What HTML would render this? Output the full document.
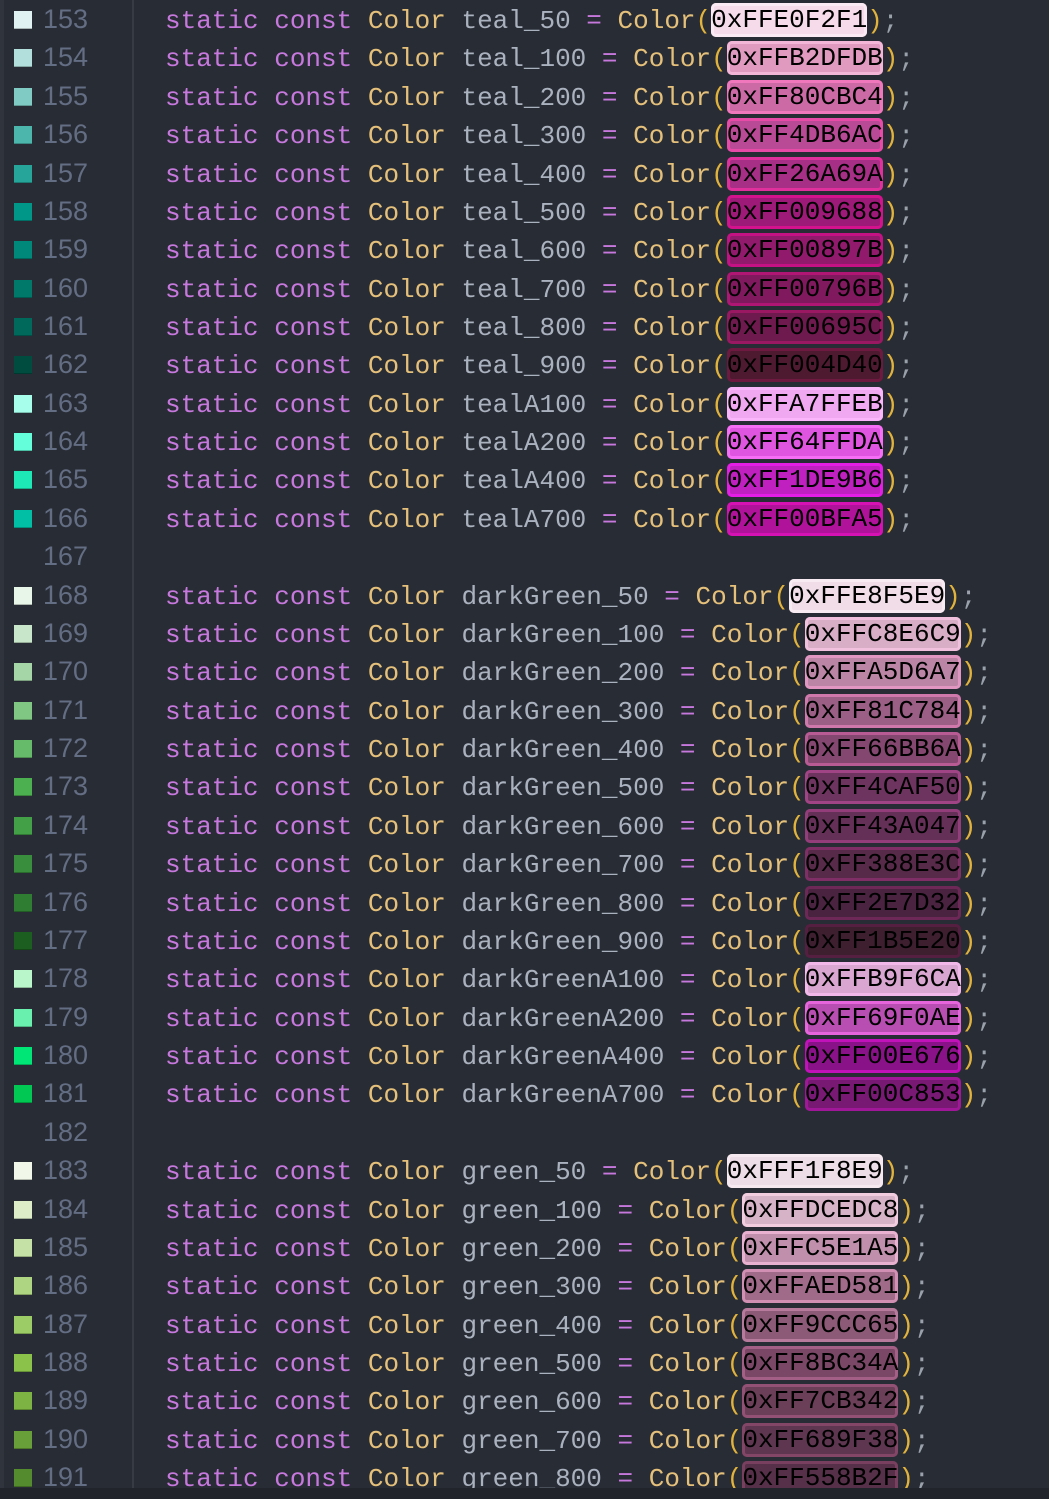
<!DOCTYPE html>
<html><head><meta charset="utf-8"><style>
html,body{margin:0;padding:0}
body{width:1049px;height:1499px;background:#282c34;position:relative;overflow:hidden;font-family:"Liberation Mono","DejaVu Sans Mono",monospace}
.strip{position:absolute;left:0;top:0;width:4px;height:1499px;background:#30343c}
.gl{position:absolute;left:132px;top:0;width:2px;height:1488px;background:#363b44}
.l{position:absolute;left:0;height:38px;width:1049px}
.l i{position:absolute;left:14px;top:10px;width:18px;height:18px;box-shadow:inset 0 -1px 0 rgba(0,0,0,.25)}
.l b{position:absolute;left:43px;top:3px;line-height:38px;font:27px "Liberation Sans","DejaVu Sans",sans-serif;font-weight:normal;color:#636d83}
.l code{position:absolute;left:165px;top:1px;line-height:38px;font-size:26px;font-family:"Liberation Mono",monospace;color:#abb2bf;white-space:pre}
k{color:#c678dd}t{color:#e5c07b}p{color:#e2b33c;display:inline}s{color:#9aa1ab;text-decoration:none}
h{display:inline-block;line-height:34px;height:34px;color:#000;border-radius:5px;vertical-align:top;margin-top:1px}
.bot{position:absolute;left:0;top:1488px;width:1049px;height:11px;background:#21252b}
</style></head><body>
<div class="strip"></div><div class="gl"></div>

<div class="l" style="top:1px"><i style="background:#E0F2F1"></i><b>153</b><code><k>static const</k> <t>Color</t> teal_50 <k>=</k> <t>Color</t><p>(</p><h style="background:#f6dcea;box-shadow:inset 0 0 0 3px #fbe9f3">0xFFE0F2F1</h><p>)</p><s>;</s></code></div>
<div class="l" style="top:39.4px"><i style="background:#B2DFDB"></i><b>154</b><code><k>static const</k> <t>Color</t> teal_100 <k>=</k> <t>Color</t><p>(</p><h style="background:#e09ac0;box-shadow:inset 0 0 0 3px #f3b6d6">0xFFB2DFDB</h><p>)</p><s>;</s></code></div>
<div class="l" style="top:77.7px"><i style="background:#80CBC4"></i><b>155</b><code><k>static const</k> <t>Color</t> teal_200 <k>=</k> <t>Color</t><p>(</p><h style="background:#cc6aa6;box-shadow:inset 0 0 0 3px #f077bb">0xFF80CBC4</h><p>)</p><s>;</s></code></div>
<div class="l" style="top:116.1px"><i style="background:#4DB6AC"></i><b>156</b><code><k>static const</k> <t>Color</t> teal_300 <k>=</k> <t>Color</t><p>(</p><h style="background:#b94a95;box-shadow:inset 0 0 0 3px #e84aa8">0xFF4DB6AC</h><p>)</p><s>;</s></code></div>
<div class="l" style="top:154.5px"><i style="background:#26A69A"></i><b>157</b><code><k>static const</k> <t>Color</t> teal_400 <k>=</k> <t>Color</t><p>(</p><h style="background:#a82f86;box-shadow:inset 0 0 0 3px #e0309c">0xFF26A69A</h><p>)</p><s>;</s></code></div>
<div class="l" style="top:192.9px"><i style="background:#009688"></i><b>158</b><code><k>static const</k> <t>Color</t> teal_500 <k>=</k> <t>Color</t><p>(</p><h style="background:#9e1a78;box-shadow:inset 0 0 0 3px #d4128e">0xFF009688</h><p>)</p><s>;</s></code></div>
<div class="l" style="top:231.2px"><i style="background:#00897B"></i><b>159</b><code><k>static const</k> <t>Color</t> teal_600 <k>=</k> <t>Color</t><p>(</p><h style="background:#911a6d;box-shadow:inset 0 0 0 3px #c41284">0xFF00897B</h><p>)</p><s>;</s></code></div>
<div class="l" style="top:269.6px"><i style="background:#00796B"></i><b>160</b><code><k>static const</k> <t>Color</t> teal_700 <k>=</k> <t>Color</t><p>(</p><h style="background:#80195e;box-shadow:inset 0 0 0 3px #b01674">0xFF00796B</h><p>)</p><s>;</s></code></div>
<div class="l" style="top:308px"><i style="background:#00695C"></i><b>161</b><code><k>static const</k> <t>Color</t> teal_800 <k>=</k> <t>Color</t><p>(</p><h style="background:#6e1a4e;box-shadow:inset 0 0 0 3px #9a1862">0xFF00695C</h><p>)</p><s>;</s></code></div>
<div class="l" style="top:346.3px"><i style="background:#004D40"></i><b>162</b><code><k>static const</k> <t>Color</t> teal_900 <k>=</k> <t>Color</t><p>(</p><h style="background:#4e1a30;box-shadow:inset 0 0 0 3px #6e1a40">0xFF004D40</h><p>)</p><s>;</s></code></div>
<div class="l" style="top:384.7px"><i style="background:#A7FFEB"></i><b>163</b><code><k>static const</k> <t>Color</t> tealA100 <k>=</k> <t>Color</t><p>(</p><h style="background:#f0a8f0;box-shadow:inset 0 0 0 3px #fbb6fb">0xFFA7FFEB</h><p>)</p><s>;</s></code></div>
<div class="l" style="top:423.1px"><i style="background:#64FFDA"></i><b>164</b><code><k>static const</k> <t>Color</t> tealA200 <k>=</k> <t>Color</t><p>(</p><h style="background:#e055df;box-shadow:inset 0 0 0 3px #f56ef5">0xFF64FFDA</h><p>)</p><s>;</s></code></div>
<div class="l" style="top:461.4px"><i style="background:#1DE9B6"></i><b>165</b><code><k>static const</k> <t>Color</t> tealA400 <k>=</k> <t>Color</t><p>(</p><h style="background:#c020c0;box-shadow:inset 0 0 0 3px #e41ee4">0xFF1DE9B6</h><p>)</p><s>;</s></code></div>
<div class="l" style="top:499.8px"><i style="background:#00BFA5"></i><b>166</b><code><k>static const</k> <t>Color</t> tealA700 <k>=</k> <t>Color</t><p>(</p><h style="background:#b0139a;box-shadow:inset 0 0 0 3px #d612b4">0xFF00BFA5</h><p>)</p><s>;</s></code></div>
<div class="l" style="top:538.2px"><b>167</b></div>
<div class="l" style="top:576.5px"><i style="background:#E8F5E9"></i><b>168</b><code><k>static const</k> <t>Color</t> darkGreen_50 <k>=</k> <t>Color</t><p>(</p><h style="background:#f0dde8;box-shadow:inset 0 0 0 3px #f8ebf2">0xFFE8F5E9</h><p>)</p><s>;</s></code></div>
<div class="l" style="top:614.9px"><i style="background:#C8E6C9"></i><b>169</b><code><k>static const</k> <t>Color</t> darkGreen_100 <k>=</k> <t>Color</t><p>(</p><h style="background:#d8adc6;box-shadow:inset 0 0 0 3px #f0c0dc">0xFFC8E6C9</h><p>)</p><s>;</s></code></div>
<div class="l" style="top:653.3px"><i style="background:#A5D6A7"></i><b>170</b><code><k>static const</k> <t>Color</t> darkGreen_200 <k>=</k> <t>Color</t><p>(</p><h style="background:#bb86a6;box-shadow:inset 0 0 0 3px #e196c2">0xFFA5D6A7</h><p>)</p><s>;</s></code></div>
<div class="l" style="top:691.7px"><i style="background:#81C784"></i><b>171</b><code><k>static const</k> <t>Color</t> darkGreen_300 <k>=</k> <t>Color</t><p>(</p><h style="background:#9b5f85;box-shadow:inset 0 0 0 3px #cf78ab">0xFF81C784</h><p>)</p><s>;</s></code></div>
<div class="l" style="top:730px"><i style="background:#66BB6A"></i><b>172</b><code><k>static const</k> <t>Color</t> darkGreen_400 <k>=</k> <t>Color</t><p>(</p><h style="background:#84476f;box-shadow:inset 0 0 0 3px #b85b95">0xFF66BB6A</h><p>)</p><s>;</s></code></div>
<div class="l" style="top:768.4px"><i style="background:#4CAF50"></i><b>173</b><code><k>static const</k> <t>Color</t> darkGreen_500 <k>=</k> <t>Color</t><p>(</p><h style="background:#6e3460;box-shadow:inset 0 0 0 3px #a04485">0xFF4CAF50</h><p>)</p><s>;</s></code></div>
<div class="l" style="top:806.8px"><i style="background:#43A047"></i><b>174</b><code><k>static const</k> <t>Color</t> darkGreen_600 <k>=</k> <t>Color</t><p>(</p><h style="background:#653058;box-shadow:inset 0 0 0 3px #933e7a">0xFF43A047</h><p>)</p><s>;</s></code></div>
<div class="l" style="top:845.1px"><i style="background:#388E3C"></i><b>175</b><code><k>static const</k> <t>Color</t> darkGreen_700 <k>=</k> <t>Color</t><p>(</p><h style="background:#582a49;box-shadow:inset 0 0 0 3px #802e66">0xFF388E3C</h><p>)</p><s>;</s></code></div>
<div class="l" style="top:883.5px"><i style="background:#2E7D32"></i><b>176</b><code><k>static const</k> <t>Color</t> darkGreen_800 <k>=</k> <t>Color</t><p>(</p><h style="background:#4a2340;box-shadow:inset 0 0 0 3px #6e2858">0xFF2E7D32</h><p>)</p><s>;</s></code></div>
<div class="l" style="top:921.9px"><i style="background:#1B5E20"></i><b>177</b><code><k>static const</k> <t>Color</t> darkGreen_900 <k>=</k> <t>Color</t><p>(</p><h style="background:#3e1f30;box-shadow:inset 0 0 0 3px #551f42">0xFF1B5E20</h><p>)</p><s>;</s></code></div>
<div class="l" style="top:960.2px"><i style="background:#B9F6CA"></i><b>178</b><code><k>static const</k> <t>Color</t> darkGreenA100 <k>=</k> <t>Color</t><p>(</p><h style="background:#d8a6d0;box-shadow:inset 0 0 0 3px #f2b8ea">0xFFB9F6CA</h><p>)</p><s>;</s></code></div>
<div class="l" style="top:998.6px"><i style="background:#69F0AE"></i><b>179</b><code><k>static const</k> <t>Color</t> darkGreenA200 <k>=</k> <t>Color</t><p>(</p><h style="background:#b94eb2;box-shadow:inset 0 0 0 3px #e664dc">0xFF69F0AE</h><p>)</p><s>;</s></code></div>
<div class="l" style="top:1037px"><i style="background:#00E676"></i><b>180</b><code><k>static const</k> <t>Color</t> darkGreenA400 <k>=</k> <t>Color</t><p>(</p><h style="background:#8a1288;box-shadow:inset 0 0 0 3px #c012b8">0xFF00E676</h><p>)</p><s>;</s></code></div>
<div class="l" style="top:1075.3px"><i style="background:#00C853"></i><b>181</b><code><k>static const</k> <t>Color</t> darkGreenA700 <k>=</k> <t>Color</t><p>(</p><h style="background:#781a74;box-shadow:inset 0 0 0 3px #a01898">0xFF00C853</h><p>)</p><s>;</s></code></div>
<div class="l" style="top:1113.7px"><b>182</b></div>
<div class="l" style="top:1152.1px"><i style="background:#F1F8E9"></i><b>183</b><code><k>static const</k> <t>Color</t> green_50 <k>=</k> <t>Color</t><p>(</p><h style="background:#eddde6;box-shadow:inset 0 0 0 3px #f6eaf0">0xFFF1F8E9</h><p>)</p><s>;</s></code></div>
<div class="l" style="top:1190.5px"><i style="background:#DCEDC8"></i><b>184</b><code><k>static const</k> <t>Color</t> green_100 <k>=</k> <t>Color</t><p>(</p><h style="background:#d7b3c8;box-shadow:inset 0 0 0 3px #f2cde0">0xFFDCEDC8</h><p>)</p><s>;</s></code></div>
<div class="l" style="top:1228.8px"><i style="background:#C5E1A5"></i><b>185</b><code><k>static const</k> <t>Color</t> green_200 <k>=</k> <t>Color</t><p>(</p><h style="background:#bf8fab;box-shadow:inset 0 0 0 3px #e8b1cf">0xFFC5E1A5</h><p>)</p><s>;</s></code></div>
<div class="l" style="top:1267.2px"><i style="background:#AED581"></i><b>186</b><code><k>static const</k> <t>Color</t> green_300 <k>=</k> <t>Color</t><p>(</p><h style="background:#a06a89;box-shadow:inset 0 0 0 3px #d08fb3">0xFFAED581</h><p>)</p><s>;</s></code></div>
<div class="l" style="top:1305.6px"><i style="background:#9CCC65"></i><b>187</b><code><k>static const</k> <t>Color</t> green_400 <k>=</k> <t>Color</t><p>(</p><h style="background:#8c5a76;box-shadow:inset 0 0 0 3px #b77a9d">0xFF9CCC65</h><p>)</p><s>;</s></code></div>
<div class="l" style="top:1343.9px"><i style="background:#8BC34A"></i><b>188</b><code><k>static const</k> <t>Color</t> green_500 <k>=</k> <t>Color</t><p>(</p><h style="background:#7a4866;box-shadow:inset 0 0 0 3px #a35f86">0xFF8BC34A</h><p>)</p><s>;</s></code></div>
<div class="l" style="top:1382.3px"><i style="background:#7CB342"></i><b>189</b><code><k>static const</k> <t>Color</t> green_600 <k>=</k> <t>Color</t><p>(</p><h style="background:#6b3f58;box-shadow:inset 0 0 0 3px #935175">0xFF7CB342</h><p>)</p><s>;</s></code></div>
<div class="l" style="top:1420.7px"><i style="background:#689F38"></i><b>190</b><code><k>static const</k> <t>Color</t> green_700 <k>=</k> <t>Color</t><p>(</p><h style="background:#5e3650;box-shadow:inset 0 0 0 3px #844667">0xFF689F38</h><p>)</p><s>;</s></code></div>
<div class="l" style="top:1459px"><i style="background:#558B2F"></i><b>191</b><code><k>static const</k> <t>Color</t> green_800 <k>=</k> <t>Color</t><p>(</p><h style="background:#553048;box-shadow:inset 0 0 0 3px #78405e">0xFF558B2F</h><p>)</p><s>;</s></code></div>

<div class="bot"></div>
</body></html>
